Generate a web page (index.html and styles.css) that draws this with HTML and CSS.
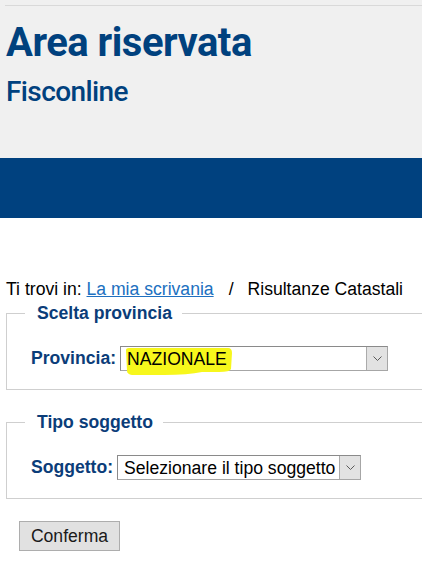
FILE: index.html
```html
<!DOCTYPE html>
<html lang="it">
<head>
<meta charset="UTF-8">
<meta name="viewport" content="width=device-width, initial-scale=1.0">
<title>Area riservata - Fisconline</title>
<link rel="stylesheet" href="styles.css">
</head>
<body>

<header class="masthead">
  <div class="topline"></div>
  <h1 class="title">Area riservata</h1>
  <p class="subtitle">Fisconline</p>
</header>
<div class="band"></div>

<main class="content">
  <p class="crumbs">Ti trovi in: <a href="#">La mia scrivania</a><span class="sep">/</span>Risultanze Catastali</p>

  <form>
    <fieldset class="group">
      <legend>Scelta provincia</legend>
      <div class="field">
        <label for="provincia">Provincia:</label>
        <span class="select wide">
          <select id="provincia">
            <option>NAZIONALE</option>
          </select>
          <span class="arrow">
            <svg width="9" height="5" viewBox="0 0 9 5"><path d="M0.5 0.5 L4.5 4.5 L8.5 0.5" fill="none" stroke="#5a5a5a" stroke-width="1"/></svg>
          </span>
          <!-- evidenziatore -->
          <svg class="marker" width="110" height="30" viewBox="0 0 110 30">
            <path d="M2 3 Q2 1 5 1 L104 1 Q108 1 108 6 L107 22 Q106 25 95 25 L78 25 Q64 28 40 28 L8 28 Q3 27 3 24 Z" fill="#f7f71c"/>
          </svg>
        </span>
      </div>
    </fieldset>

    <fieldset class="group">
      <legend>Tipo soggetto</legend>
      <div class="field">
        <label for="soggetto">Soggetto:</label>
        <span class="select narrow">
          <select id="soggetto">
            <option>Selezionare il tipo soggetto</option>
          </select>
          <span class="arrow">
            <svg width="9" height="5" viewBox="0 0 9 5"><path d="M0.5 0.5 L4.5 4.5 L8.5 0.5" fill="none" stroke="#5a5a5a" stroke-width="1"/></svg>
          </span>
        </span>
      </div>
    </fieldset>

    <button type="button" class="btn">Conferma</button>
  </form>
</main>

</body>
</html>
```

FILE: styles.css
```css
body {
  margin: 0;
  font-family: "Liberation Sans", Arial, sans-serif;
  font-size: 17.6px;
  color: #000;
  background-color: #fff;
}

/* Header */
.masthead {
  height: 158px;
  background-color: #f0f0f0;
  overflow: hidden;
}

.topline {
  height: 1px;
  margin: 5px 0 0 5px;
  background-color: #d9d9d9;
}

.title {
  margin: 13px 0 0 6px;
  font-family: Roboto, "Open Sans", sans-serif;
  font-size: 40px;
  line-height: 48px;
  font-weight: 700;
  letter-spacing: -0.5px;
  color: #00417e;
}

.subtitle {
  margin: 8px 0 0 6px;
  font-family: Roboto, "Open Sans", sans-serif;
  font-size: 28px;
  line-height: 34px;
  font-weight: 500;
  letter-spacing: -0.6px;
  color: #00417e;
}

.band {
  height: 60px;
  background-color: #00417f;
}

/* Breadcrumb */
.crumbs {
  margin: 61px 0 4px 6px;
  line-height: 20px;
  white-space: nowrap;
}

.crumbs a {
  color: #2070c0;
}

.sep {
  padding: 0 14px 0 15px;
}

/* Fieldsets (right edge falls outside the window) */
.group {
  margin: 0 0 22px 6px;
  padding: 23px 0 18px 24px;
  border: 1px solid #cfcfcf;
  border-right: none;
}

.group legend {
  margin-left: -6px;
  padding: 0 10px 0 12px;
  font-weight: bold;
  line-height: 20px;
  color: #0b3d79;
}

.field {
  display: flex;
  align-items: center;
  gap: 4px;
}

.field label {
  font-weight: bold;
  color: #0b3d79;
}

/* Select */
.select {
  position: relative;
  display: inline-flex;
  height: 25px;
  box-sizing: border-box;
  border: 1px solid #a6a6a6;
  border-top-color: #8a8a8a;
  border-left-color: #8a8a8a;
  background-color: #fff;
}

.select.wide {
  width: 268px;
}

.select.narrow {
  width: 244px;
}

.select select {
  flex: 1;
  min-width: 0;
  -webkit-appearance: none;
  appearance: none;
  border: none;
  background: transparent;
  padding: 0 0 0 6px;
  font-family: inherit;
  font-size: 17.6px;
  color: #000;
  position: relative;
  z-index: 1;
}

.arrow {
  width: 20px;
  display: flex;
  align-items: center;
  justify-content: center;
  background-color: #e2e2e2;
  border-left: 1px solid #ababab;
}

.marker {
  position: absolute;
  left: 3px;
  top: 0;
  z-index: 0;
}

/* Button */
.btn {
  margin: 0 0 0 19px;
  width: 101px;
  height: 30px;
  padding: 0;
  font-family: inherit;
  font-size: 17.6px;
  color: #1a1a1a;
  background-color: #e1e1e1;
  border: 1px solid #adadad;
}
```
